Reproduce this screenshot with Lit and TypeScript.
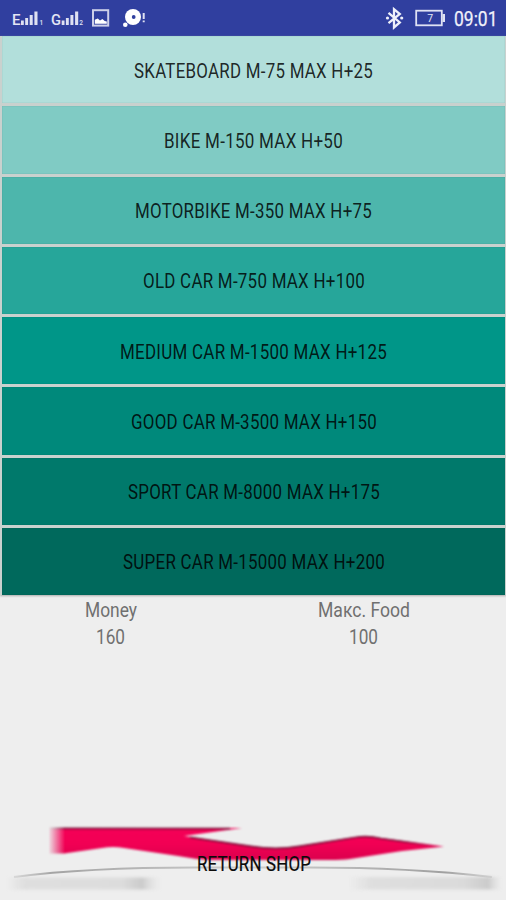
import { LitElement, html, svg, css } from "lit";
import { customElement } from "lit/decorators.js";

interface Item { name: string; width: number; color: string; }

const items: Item[] = [
  { name: "SKATEBOARD M-75 MAX H+25", width: 239, color: "#b2dfdb" },
  { name: "BIKE M-150 MAX H+50", width: 179, color: "#80cbc4" },
  { name: "MOTORBIKE M-350 MAX H+75", width: 237, color: "#4db6ac" },
  { name: "OLD CAR M-750 MAX H+100", width: 222, color: "#26a69a" },
  { name: "MEDIUM CAR M-1500 MAX H+125", width: 267, color: "#009688" },
  { name: "GOOD CAR M-3500 MAX H+150", width: 246, color: "#00897b" },
  { name: "SPORT CAR M-8000 MAX H+175", width: 252, color: "#00796b" },
  { name: "SUPER CAR M-15000 MAX H+200", width: 262, color: "#00695c" },
];

const label = (text: string, width: number) => html`
  <svg class="label" width=${width} height="26">
    ${svg`<text x="0" y="20" textLength=${width} lengthAdjust="spacingAndGlyphs">${text}</text>`}
  </svg>`;

@customElement("status-bar")
class StatusBar extends LitElement {
  static styles = css`
    :host { display: block; height: 36px; background: #303f9f; }
    svg { display: block; }
    text { font-family: Roboto, sans-serif; fill: #e3e5f4; }
    .letter { font-size: 14px; font-weight: 500; }
    .sub { font-size: 6.5px; font-weight: 500; }
    .charge { font-size: 10.5px; }
    .clock { font-size: 20.5px; fill: #f0f1fa; stroke: #f0f1fa; stroke-width: .25; }
  `;
  render() {
    return html`<svg width="506" height="36" viewBox="0 0 506 36">
      <g fill="#dfe1f2">
        <text class="letter" x="12" y="24.9" textLength="8.5" lengthAdjust="spacingAndGlyphs">E</text>
        <path d="M21 20.5h2.8V25H21zM25.2 18h2.9v7h-2.9zM29.7 15h3v10h-3zM34.4 11.5h3.1V25h-3.1z"/>
        <text class="sub" x="39.5" y="25">1</text>
        <text class="letter" x="51" y="24.9" textLength="10" lengthAdjust="spacingAndGlyphs">G</text>
        <path d="M61.7 20.5h2.8V25h-2.8zM65.9 18h2.9v7h-2.9zM70.4 15h3v10h-3zM75.1 11.5h3.1V25h-3.1z"/>
        <text class="sub" x="79.3" y="25">2</text>
      </g>
      <rect x="93" y="10.2" width="15.2" height="15.4" fill="none" stroke="#cdd0e9" stroke-width="2"/>
      <path fill="#fff" d="M94.8 23.8v-4l3-1.2 2.2 1.8 2.4-1.5 2.3 2 2.1.6v2.3z"/>
      <circle cx="133" cy="17" r="8" fill="#fff"/>
      <circle cx="133.7" cy="17" r="1.9" fill="#303f9f"/>
      <circle cx="125.3" cy="24.7" r="2.3" fill="#fff"/>
      <path fill="#dfe1f2" d="M142.7 13h2v6h-2zM142.7 20.5h2v1.8h-2z"/>
      <path d="M388.5 12.8l11.3 9.6-5.8 5V9.2l5.8 4.8-11.3 9.2" fill="none" stroke="#eef0fa" stroke-width="2.3"/>
      <circle cx="387.5" cy="18" r="1.6" fill="#eef0fa"/>
      <circle cx="401.7" cy="18" r="1.6" fill="#eef0fa"/>
      <rect x="416.2" y="10.7" width="25.6" height="14.6" fill="none" stroke="#dfe2f3" stroke-width="1.8"/>
      <path d="M442.5 14h2.5v8h-2.5z" fill="#dfe2f3"/>
      <text class="charge" x="427.2" y="22">7</text>
      <text class="clock" x="454" y="26.3" textLength="43.5" lengthAdjust="spacingAndGlyphs">09:01</text>
    </svg>`;
  }
}

@customElement("return-button")
class ReturnButton extends LitElement {
  static styles = css`
    :host { display: block; height: 90px; }
    svg { display: block; }
    text { font-family: Roboto, sans-serif; font-size: 19.5px; letter-spacing: .2px; fill: #0b0b0b; stroke: #0b0b0b; stroke-width: .2; }
  `;
  render() {
    return html`<svg width="506" height="90" viewBox="0 810 506 90">
      <defs>
        <linearGradient id="red" x1="0" y1="827" x2="0" y2="861" gradientUnits="userSpaceOnUse">
          <stop offset="0" stop-color="#f50057"/><stop offset=".5" stop-color="#f20054"/><stop offset="1" stop-color="#d9004d"/>
        </linearGradient>
        <linearGradient id="fade" x1="48" y1="0" x2="65" y2="0" gradientUnits="userSpaceOnUse">
          <stop offset="0" stop-color="#000"/><stop offset="1" stop-color="#fff"/>
        </linearGradient>
        <linearGradient id="shade" x1="48" y1="0" x2="442" y2="0" gradientUnits="userSpaceOnUse">
          <stop offset="0" stop-color="#80103a"/><stop offset=".9" stop-color="#80103a"/><stop offset="1" stop-color="#80103a" stop-opacity="0"/>
        </linearGradient>
        <mask id="edge" maskUnits="userSpaceOnUse" x="0" y="810" width="506" height="90">
          <rect y="810" width="506" height="90" fill="url(#fade)"/>
        </mask>
        <linearGradient id="left" x1="8" y1="0" x2="160" y2="0" gradientUnits="userSpaceOnUse">
          <stop offset="0" stop-color="#d9d9d9" stop-opacity="0"/><stop offset=".12" stop-color="#dedede"/>
          <stop offset=".75" stop-color="#dcdcdc"/><stop offset=".88" stop-color="#cbcbcb"/><stop offset="1" stop-color="#ddd" stop-opacity="0"/>
        </linearGradient>
        <linearGradient id="right" x1="349" y1="0" x2="502" y2="0" gradientUnits="userSpaceOnUse">
          <stop offset="0" stop-color="#ddd" stop-opacity="0"/><stop offset=".15" stop-color="#dedede"/>
          <stop offset=".75" stop-color="#dadada"/><stop offset=".91" stop-color="#cbcbcb"/><stop offset="1" stop-color="#ddd" stop-opacity="0"/>
        </linearGradient>
        <linearGradient id="arc" x1="14" y1="0" x2="493" y2="0" gradientUnits="userSpaceOnUse">
          <stop offset="0" stop-color="#aaa" stop-opacity=".3"/><stop offset=".08" stop-color="#a4a4a4"/>
          <stop offset=".5" stop-color="#cecece"/><stop offset=".9" stop-color="#a0a0a0"/><stop offset="1" stop-color="#aaa" stop-opacity=".3"/>
        </linearGradient>
        <filter id="soft" x="-10%" y="-100%" width="120%" height="300%" color-interpolation-filters="sRGB"><feGaussianBlur stdDeviation="1.6"/></filter>
        <filter id="slight" color-interpolation-filters="sRGB"><feGaussianBlur stdDeviation=".8"/></filter>
      </defs>
      <rect x="8" y="877.5" width="152" height="12" fill="url(#left)" filter="url(#soft)"/>
      <rect x="349" y="877" width="153" height="12.5" fill="url(#right)" filter="url(#soft)"/>
      <path d="M14 877C60 871 110 867.5 195 867.5H310C390 867.5 440 871 492 877" fill="none" stroke="url(#arc)" stroke-width="2.1"/>
      <g mask="url(#edge)" filter="url(#slight)">
        <path fill="url(#red)" d="M48 828H242L184 836 251 846Q276 850 299 846L355 837Q368 835 381 838L444 846.5 402 851 350 859Q342 860 330 860H210Q193 859 178 856L124 848Q113 846 102 848L64 853.5H48z"/>
        <path fill="none" stroke="url(#shade)" stroke-width="1.7" d="M48 828.3L230 828.7M190 837.4L251 846.4Q276 850.4 299 846.4L355 837.5Q368 835.5 381 838.5L438 846.3"/>
      </g>
      <text x="197" y="871" textLength="114" lengthAdjust="spacingAndGlyphs">RETURN SHOP</text>
    </svg>`;
  }
}

@customElement("app-root")
class AppRoot extends LitElement {
  static styles = css`
    :host { display: flex; flex-direction: column; height: 900px; background: #eeeeee; overflow: hidden; }
    .list { display: grid; grid-template-rows: repeat(8, 1fr); gap: 3px; height: 559px; box-sizing: border-box; padding: 0 1px 0 2px; background: #c9d1ce; box-shadow: 0 1px 2px #aaa; }
    .row { display: flex; align-items: center; justify-content: center; box-shadow: inset 0 0 1px rgba(0, 50, 45, .35); padding: 2px 0 0; }
    .label { display: block; overflow: visible; }
    text { font-family: Roboto, sans-serif; font-size: 19.5px; fill: #707070; }
    .row text { letter-spacing: .3px; fill: rgba(0, 0, 0, .84); }
    .stats { display: grid; grid-template-columns: 221px 285px; padding-top: 2px; flex: 1; align-content: start; }
    .stat { display: flex; flex-direction: column; align-items: center; gap: 1px; }
  `;
  render() {
    return html`
      <status-bar></status-bar>
      <div class="list">
        ${items.map(i => html`<div class="row" style="background:${i.color}">${label(i.name, i.width)}</div>`)}
      </div>
      <div class="stats">
        <div class="stat">${label("Money", 52)}${label("160", 29)}</div>
        <div class="stat">${label("Макс. Food", 92)}${label("100", 29)}</div>
      </div>
      <return-button></return-button>`;
  }
}
